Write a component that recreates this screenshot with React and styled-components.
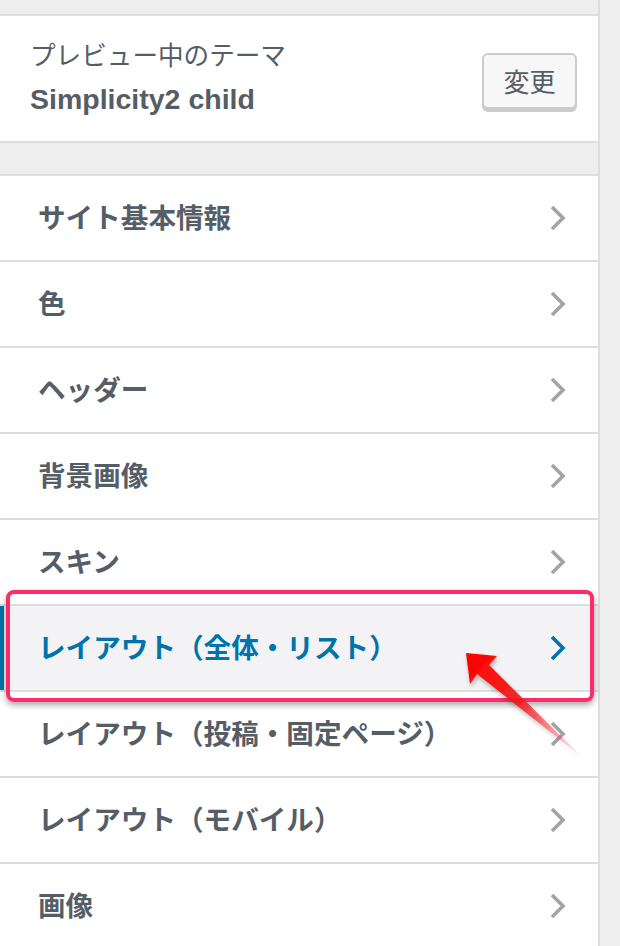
import React from 'react';
import styled, { createGlobalStyle } from 'styled-components';

const GlobalStyle = createGlobalStyle`
  html, body {
    margin: 0;
    padding: 0;
    background: #eeeeee;
  }
  body {
    font-family: "Liberation Sans", "Noto Sans CJK JP", sans-serif;
    color: #555d66;
  }
`;

const Page = styled.div`
  position: relative;
  width: 620px;
  height: 946px;
  overflow: hidden;
  display: flex;
  align-items: flex-start;
  background: #eeeeee;
`;

const Panel = styled.div`
  width: 598px;
  min-height: 946px;
  border-right: 2px solid #dddddd;
  background: #eeeeee;
  display: flex;
  flex-direction: column;
  flex-shrink: 0;

  & > * {
    flex-shrink: 0;
  }
`;

const Gap = styled.div`
  height: ${(p) => p.$h}px;
`;

const ThemeBox = styled.div`
  background: #ffffff;
  border-top: 2px solid #dddddd;
  border-bottom: 2px solid #dddddd;
  height: 125px;
  display: flex;
  align-items: center;
  justify-content: space-between;
  padding: 0 21px 0 30px;
`;

const ThemeInfo = styled.div`
  display: flex;
  flex-direction: column;
  gap: 14px;
  margin-top: -4px;
`;

const ThemeLabel = styled.span`
  font-family: "Noto Sans CJK JP", sans-serif;
  font-size: 25.6px;
  font-weight: 400;
  line-height: 30px;
  color: #555d66;
`;

const ThemeName = styled.span`
  font-family: "Liberation Sans", "Noto Sans CJK JP", sans-serif;
  font-size: 28.5px;
  font-weight: 700;
  line-height: 32px;
  color: #555d66;
`;

const ChangeButton = styled.button`
  width: 95px;
  height: 56px;
  margin-top: 4px;
  background: #f7f7f7;
  border: 2px solid #cccccc;
  border-radius: 6px;
  box-shadow: 0 3px 0 #cccccc;
  font-family: "Noto Sans CJK JP", sans-serif;
  font-size: 26px;
  color: #555d66;
  padding: 0;
`;

const List = styled.ul`
  list-style: none;
  margin: 0;
  padding: 0;
  border-top: 2px solid #dddddd;
`;

const Row = styled.li`
  height: 84px;
  border-bottom: 2px solid #dddddd;
  display: flex;
  align-items: center;
  justify-content: space-between;
  padding: 0 32px 0 38px;
  background: ${(p) => (p.$active ? '#f3f3f5' : '#ffffff')};
  color: ${(p) => (p.$active ? '#0073aa' : '#555d66')};
  box-shadow: ${(p) => (p.$active ? 'inset 4px 0 0 #0073aa' : 'none')};
`;

const RowTitle = styled.span`
  font-family: "Noto Sans CJK JP", sans-serif;
  font-size: 27.6px;
  font-weight: 700;
  line-height: 32px;
  margin-top: -4px;
`;

const Chevron = ({ color }) => (
  <svg width="16" height="26" viewBox="0 0 16 26">
    <polyline
      points="2,2 13,13 2,24"
      fill="none"
      stroke={color}
      strokeWidth="3.6"
    />
  </svg>
);

const Highlight = styled.div`
  position: absolute;
  left: 6px;
  top: 590px;
  width: 580px;
  height: 104px;
  border: 4px solid #ff2a6a;
  border-radius: 8px;
  box-shadow: 0 3px 6px rgba(0, 0, 0, 0.35);
  pointer-events: none;
`;

const ArrowLayer = styled.svg`
  position: absolute;
  left: 0;
  top: 0;
  pointer-events: none;
`;

const items = [
  'サイト基本情報',
  '色',
  'ヘッダー',
  '背景画像',
  'スキン',
  'レイアウト（全体・リスト）',
  'レイアウト（投稿・固定ページ）',
  'レイアウト（モバイル）',
  '画像',
];

const App = () => (
  <>
    <GlobalStyle />
    <Page>
      <Panel>
        <Gap $h={14} />
        <ThemeBox>
          <ThemeInfo>
            <ThemeLabel>プレビュー中のテーマ</ThemeLabel>
            <ThemeName>Simplicity2 child</ThemeName>
          </ThemeInfo>
          <ChangeButton>変更</ChangeButton>
        </ThemeBox>
        <Gap $h={31} />
        <List>
          {items.map((t, i) => {
            const active = i === 5;
            return (
              <Row key={t} $active={active}>
                <RowTitle>{t}</RowTitle>
                <Chevron color={active ? '#0073aa' : '#a0a5aa'} />
              </Row>
            );
          })}
        </List>
      </Panel>
      <Highlight />
      <ArrowLayer width="620" height="946" viewBox="0 0 620 946">
        <defs>
          <linearGradient id="arrowFade" x1="470" y1="655" x2="582" y2="757" gradientUnits="userSpaceOnUse">
            <stop offset="0" stopColor="#ff0000" />
            <stop offset="0.45" stopColor="#f01a1a" stopOpacity="0.9" />
            <stop offset="1" stopColor="#ff4060" stopOpacity="0.05" />
          </linearGradient>
          <filter id="arrowShadow" x="-20%" y="-20%" width="140%" height="140%">
            <feDropShadow dx="1" dy="3" stdDeviation="2" floodColor="#000" floodOpacity="0.3" />
          </filter>
        </defs>
        <polygon
          points="466,653 497,656 489,665 582,757 477,674 470,684"
          fill="url(#arrowFade)"
          filter="url(#arrowShadow)"
        />
      </ArrowLayer>
    </Page>
  </>
);

export default App;
